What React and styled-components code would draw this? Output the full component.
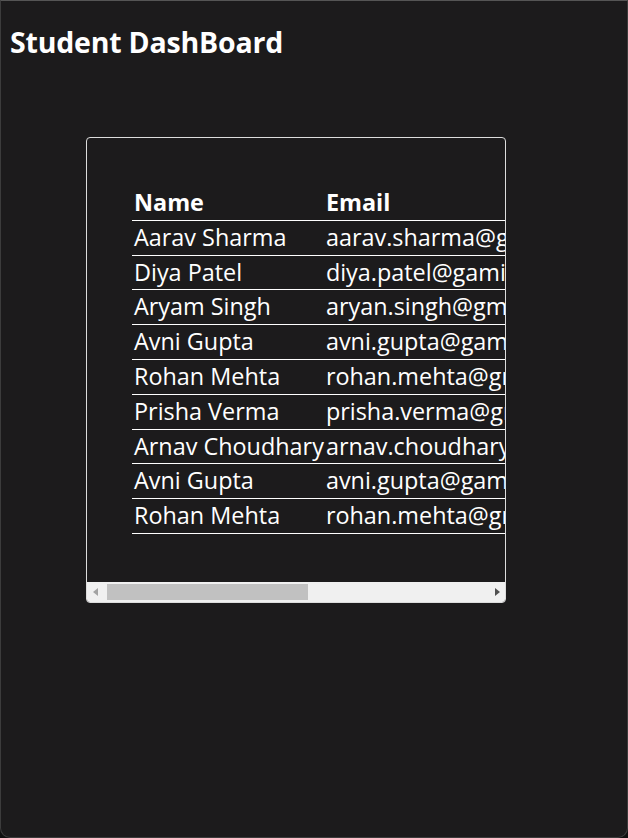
import React from 'react';
import styled, { createGlobalStyle } from 'styled-components';

const students = [
  { name: 'Aarav Sharma', email: 'aarav.sharma@gmail.com', course: 'Computer Science', phone: '9876543210' },
  { name: 'Diya Patel', email: 'diya.patel@gamil.com', course: 'Mathematics', phone: '9876543211' },
  { name: 'Aryam Singh', email: 'aryan.singh@gmail.com', course: 'Physics', phone: '9876543212' },
  { name: 'Avni Gupta', email: 'avni.gupta@gamil.com', course: 'Chemistry', phone: '9876543213' },
  { name: 'Rohan Mehta', email: 'rohan.mehta@gmail.com', course: 'Biology', phone: '9876543214' },
  { name: 'Prisha Verma', email: 'prisha.verma@gmail.com', course: 'English', phone: '9876543215' },
  { name: 'Arnav Choudhary', email: 'arnav.choudhary@gmail.com', course: 'History', phone: '9876543216' },
  { name: 'Avni Gupta', email: 'avni.gupta@gamil.com', course: 'Chemistry', phone: '9876543213' },
  { name: 'Rohan Mehta', email: 'rohan.mehta@gmail.com', course: 'Biology', phone: '9876543214' },
];

const GlobalStyle = createGlobalStyle`
  html, body {
    margin: 0;
    background: #101010;
  }
  body {
    font-family: "Open Sans", "Noto Sans", sans-serif;
    color: #fff;
  }
`;

const Window = styled.div`
  box-sizing: border-box;
  height: 838px;
  background: #1c1b1c;
  border: 1px solid #3c3c3c;
  border-top-color: #555;
  border-radius: 0 0 10px 10px;
  padding: 22px 9px 0;
`;

const Title = styled.h1`
  margin: 0 0 76px;
  font-size: 28.5px;
  line-height: 38px;
  font-weight: 700;
  letter-spacing: -0.2px;
`;

const Card = styled.div`
  box-sizing: border-box;
  width: 420px;
  margin-left: 76px;
  border: 1px solid #dcdcdc;
  border-radius: 4px;
  overflow: hidden;
  display: flex;
  flex-direction: column;
`;

const Viewport = styled.div`
  overflow: hidden;
`;

const Inner = styled.div`
  padding: 48px 45px;
  width: max-content;
`;

const Table = styled.table`
  width: 700px;
  border-collapse: collapse;
  font-size: 23.4px;
  white-space: nowrap;
`;

const Th = styled.th`
  text-align: left;
  font-weight: 700;
  padding: 0 0 0 2px;
  line-height: 33.8px;
  border-bottom: 1px solid #fff;
  width: ${(p) => p.$w || 'auto'};
`;

const Td = styled.td`
  padding: 0 0 0 2px;
  line-height: 33.8px;
  border-bottom: 1px solid #fff;
`;

const ScrollBar = styled.div`
  display: flex;
  align-items: stretch;
  height: 20px;
  background: #f0f0f0;
`;

const Arrow = styled.div`
  width: 17px;
  display: flex;
  align-items: center;
  justify-content: center;

  &::before {
    content: '';
    width: 0;
    height: 0;
    border-top: 4px solid transparent;
    border-bottom: 4px solid transparent;
    ${(p) =>
      p.$dir === 'left'
        ? 'border-right: 5px solid #a3a3a3; margin-left: -1px;'
        : 'border-left: 5px solid #505050; margin-right: -1px;'}
  }
`;

const Track = styled.div`
  flex: 1;
  display: flex;
  align-items: center;
  padding-left: 3px;
`;

const Thumb = styled.div`
  width: 201px;
  height: 16px;
  background: #c1c1c1;
`;

export default function App() {
  return (
    <>
      <GlobalStyle />
      <Window>
        <Title>Student DashBoard</Title>
        <Card>
          <Viewport>
            <Inner>
              <Table>
                <thead>
                  <tr>
                    <Th>Name</Th>
                    <Th $w="300px">Email</Th>
                    <Th>Course</Th>
                    <Th>Phone</Th>
                  </tr>
                </thead>
                <tbody>
                  {students.map((s, i) => (
                    <tr key={i}>
                      <Td>{s.name}</Td>
                      <Td>{s.email}</Td>
                      <Td>{s.course}</Td>
                      <Td>{s.phone}</Td>
                    </tr>
                  ))}
                </tbody>
              </Table>
            </Inner>
          </Viewport>
          <ScrollBar>
            <Arrow $dir="left" />
            <Track>
              <Thumb />
            </Track>
            <Arrow $dir="right" />
          </ScrollBar>
        </Card>
      </Window>
    </>
  );
}
